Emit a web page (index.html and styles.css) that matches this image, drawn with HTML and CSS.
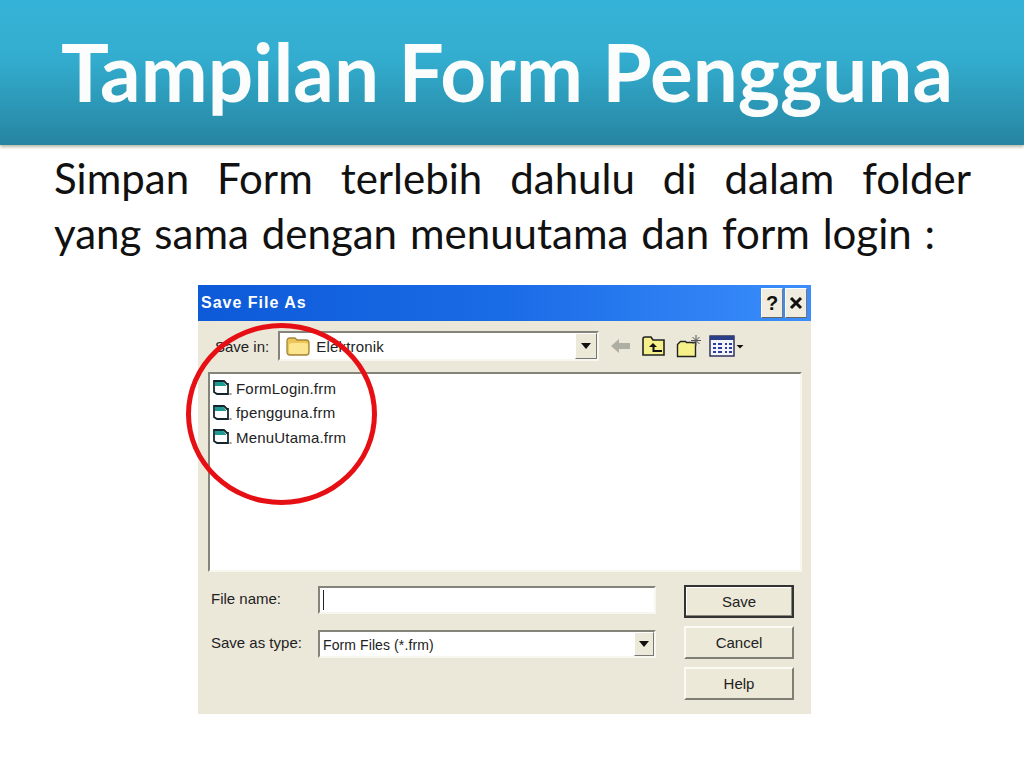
FILE: index.html
```html
<!DOCTYPE html>
<html lang="id">
<head>
<meta charset="utf-8">
<title>Tampilan Form Pengguna</title>
<link rel="stylesheet" href="styles.css">
</head>
<body>
<header class="banner"><h1>Tampilan Form Pengguna</h1></header>
<p class="lead">Simpan Form terlebih dahulu di dalam folder yang sama dengan menuutama dan form login :</p>
<section class="dialog">
  <div class="titlebar">
    <span class="title">Save File As</span>
    <span class="tbtn">?</span>
    <span class="tbtn"><svg width="14" height="14" viewBox="0 0 14 14"><path d="M2 2l10 10M12 2L2 12" stroke="#111" stroke-width="3" fill="none"/></svg></span>
  </div>
  <div class="toolbar">
    <span class="lbl">Save in:</span>
    <div class="combo folder-combo">
      <svg class="folder" width="24" height="20" viewBox="0 0 24 20"><path d="M1 5q0-3 3-3h5l2 2h9q3 0 3 3v9q0 3-3 3H4q-3 0-3-3z" fill="#eec658" stroke="#a5873c" stroke-width="1.3"/><path d="M3 10q0-3 3-3h13q3 0 3 3v6q0 2-2 2H5q-2 0-2-2z" fill="#fbe58f"/></svg>
      <span class="val">Elektronik</span>
      <span class="arrow"><i></i></span>
    </div>
    <div class="tools">
      <svg width="22" height="16" viewBox="0 0 22 16"><path d="M1 8l8-7v4h11v6H9v4z" fill="#aeaea2"/></svg>
      <svg width="26" height="22" viewBox="0 0 26 22"><path d="M2 20V4q0-2 2-2h6l2 3h11v15z" fill="#f5f08a" stroke="#222" stroke-width="1.6"/><path d="M12 8l4 4h-2.500v3H21v2H11.500v-5H8z" fill="#111"/></svg>
      <svg width="26" height="24" viewBox="0 0 26 24"><path d="M1.500 22.500v-12l3-3h5l1 1h9v14z" fill="#f5f08a" stroke="#222" stroke-width="1.4"/><path d="M20 1v11M15 6.500h10M16.500 3l7 7M23.500 3l-7 7" stroke="#555" stroke-width="1" fill="none"/></svg>
      <svg class="views" width="36" height="22" viewBox="0 0 36 22"><rect x="1" y="1" width="24" height="20" fill="#f4f4fb" stroke="#25255a" stroke-width="1.4"/><rect x="1" y="1" width="24" height="4" fill="#2b3f86"/><path d="M4 8h3v2H4zM9 8h4v2H9zM16 8h2v2h-2zM20 8h3v2h-3zM4 12h3v2H4zM9 12h4v2H9zM16 12h2v2h-2zM20 12h3v2h-3zM4 16h3v2H4zM9 16h4v2H9zM16 16h2v2h-2zM20 16h3v2h-3z" fill="#2b3fa0"/><path d="M27.500 10h7l-3.500 3.500z" fill="#111"/></svg>
    </div>
  </div>
  <div class="files">
    <div class="file"><svg class="ficon" width="20" height="18" viewBox="0 0 20 18"><path d="M2 2h10l3 3h1v10H5l-3-2z" fill="#fff" stroke="#14262b" stroke-width="1.8"/><path d="M3 3h8.500l3 4H3z" fill="#1f9a92"/><path d="M17.500 15h2" stroke="#555" stroke-width="1.200"/></svg><span>FormLogin.frm</span></div>
    <div class="file"><svg class="ficon" width="20" height="18" viewBox="0 0 20 18"><path d="M2 2h10l3 3h1v10H5l-3-2z" fill="#fff" stroke="#14262b" stroke-width="1.8"/><path d="M3 3h8.500l3 4H3z" fill="#1f9a92"/><path d="M17.500 15h2" stroke="#555" stroke-width="1.200"/></svg><span>fpengguna.frm</span></div>
    <div class="file"><svg class="ficon" width="20" height="18" viewBox="0 0 20 18"><path d="M2 2h10l3 3h1v10H5l-3-2z" fill="#fff" stroke="#14262b" stroke-width="1.8"/><path d="M3 3h8.500l3 4H3z" fill="#1f9a92"/><path d="M17.500 15h2" stroke="#555" stroke-width="1.200"/></svg><span>MenuUtama.frm</span></div>
  </div>
  <div class="form">
    <div class="fields">
      <div class="row">
        <span class="lbl name">File name:</span>
        <div class="combo input"><i class="caret"></i></div>
      </div>
      <div class="row">
        <span class="lbl name">Save as type:</span>
        <div class="combo input"><span class="val type">Form Files (*.frm)</span><span class="arrow"><i></i></span></div>
      </div>
    </div>
    <div class="buttons">
      <span class="btn default">Save</span>
      <span class="btn">Cancel</span>
      <span class="btn">Help</span>
    </div>
  </div>
  <div class="ring"></div>
</section>
</body>
</html>
```
FILE: styles.css
```css
* { box-sizing: border-box; }
html, body { margin: 0; padding: 0; }
body {
  width: 1024px;
  height: 768px;
  overflow: hidden;
  background: #fff;
  font-family: "Lato", "Open Sans", sans-serif;
  color: #111;
}
.banner {
  height: 145px;
  background: linear-gradient(#36b3d8, #33adcf 40%, #2685a1);
  box-shadow: 0 2px 3px #b9b9a8;
  display: flex;
  justify-content: center;
  align-items: center;
  padding: 0 10px 3px 0;
}
.banner h1 {
  margin: 0;
  font-size: 80px;
  font-weight: 700;
  color: #fbfdfd;
  white-space: nowrap;
}
.lead {
  margin: 0;
  padding: 6px 53px 0 54px;
  font-size: 42px;
  line-height: 55px;
  word-spacing: 2.200px;
  text-align: justify;
  color: #111;
}
.dialog {
  position: relative;
  width: 613px;
  height: 429px;
  margin: 24px 0 0 198px;
  background: #ebe8da;
  font-family: "Liberation Sans", Arial, sans-serif;
  font-size: 15px;
  color: #222;
}
.titlebar {
  height: 36px;
  display: flex;
  align-items: center;
  gap: 2px;
  padding: 0 4px 0 3px;
  background: linear-gradient(90deg, #0d5ad8, #1a6be6 50%, #3b8efb);
}
.title {
  flex: 1;
  color: #fff;
  font-weight: 700;
  font-size: 16px;
  letter-spacing: 1px;
}
.tbtn {
  width: 22px;
  height: 30px;
  background: #f0ede0;
  border: 1px solid;
  border-color: #fff #777 #666 #fff;
  color: #111;
  font-weight: 700;
  font-size: 20px;
  display: flex;
  align-items: center;
  justify-content: center;
}
.toolbar {
  height: 51px;
  display: flex;
  align-items: center;
  padding: 0 0 1px 17px;
}
.lbl { white-space: nowrap; }
.combo {
  display: flex;
  align-items: center;
  background: #fff;
  border: 2px solid;
  border-color: #85847a #f7f6ef #f7f6ef #85847a;
}
.folder-combo {
  width: 321px;
  height: 30px;
  margin-left: 9px;
  padding-left: 6px;
  gap: 6px;
}
.val { flex: 1; white-space: nowrap; letter-spacing: 0.2px; }
.type { font-size: 14px; letter-spacing: 0.1px; padding-top: 2px; }
.arrow {
  width: 22px;
  height: 26px;
  background: #ece9d8;
  border: 1px solid;
  border-color: #fff #777 #777 #fff;
  display: flex;
  align-items: center;
  justify-content: center;
}
.arrow i {
  border-left: 5px solid transparent;
  border-right: 5px solid transparent;
  border-top: 6px solid #111;
}
.tools {
  display: flex;
  align-items: center;
  gap: 9px;
  margin-left: 11px;
}
.views { margin-left: -2px; }
.files {
  width: 594px;
  height: 200px;
  margin-left: 10px;
  padding: 2px;
  background: #fff;
  border: 2px solid;
  border-color: #85847a #f7f6ef #f7f6ef #85847a;
  display: flex;
  flex-direction: column;
}
.file {
  height: 24.500px;
  display: flex;
  align-items: center;
  gap: 4px;
  font-size: 15px;
  letter-spacing: 0.2px;
}
.form {
  display: flex;
  padding: 13px 0 0 13px;
}
.fields {
  width: 473px;
  display: flex;
  flex-direction: column;
  gap: 16px;
  padding-top: 1px;
}
.row { display: flex; align-items: center; }
.name { width: 107px; margin-top: -3px; }
.input {
  width: 338px;
  height: 28px;
  padding-left: 3px;
}
.caret { width: 1px; height: 20px; background: #222; }
.input .arrow { height: 24px; width: 20px; }
.buttons {
  display: flex;
  flex-direction: column;
  gap: 8px;
}
.btn {
  width: 110px;
  height: 33px;
  display: flex;
  align-items: center;
  justify-content: center;
  background: #ece9d8;
  border: 2px solid;
  border-color: #fbfaf3 #7f7e74 #7f7e74 #fbfaf3;
  font-size: 15px;
}
.default {
  border-color: #333;
  box-shadow: inset -1px -1px 0 #8a897e, inset 1px 1px 0 #fff;
}
.ring {
  position: absolute;
  left: -12px;
  top: 38px;
  width: 191px;
  height: 182px;
  border: 5px solid #e60f14;
  border-radius: 50%;
}
```
